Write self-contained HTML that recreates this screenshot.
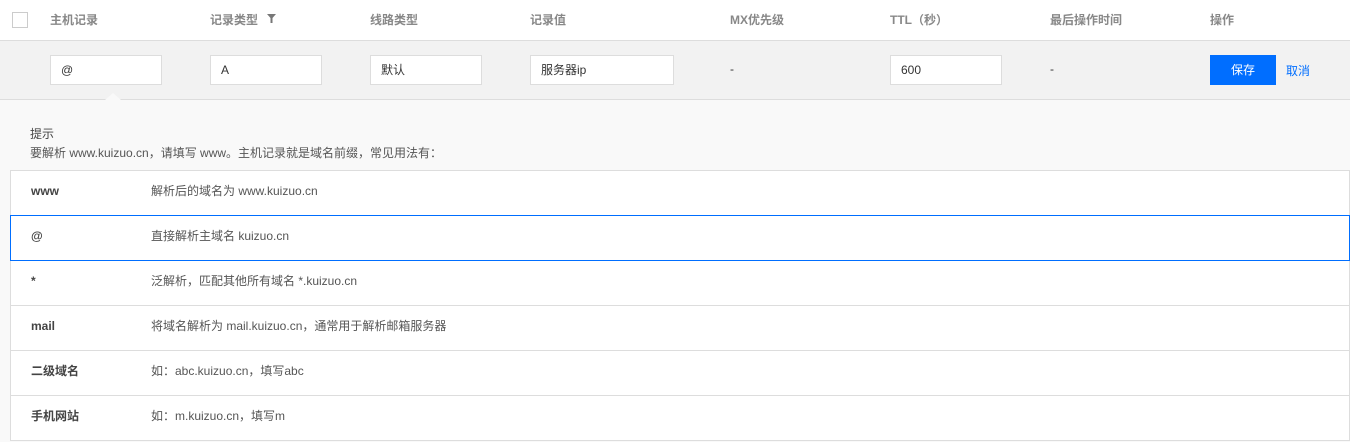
<!DOCTYPE html>
<html><head><meta charset="utf-8"><style>
*{box-sizing:border-box;margin:0;padding:0}
body{width:1350px;height:442px;background:#fff;font-family:"Liberation Sans","Noto Sans CJK SC",sans-serif;font-size:12px;color:#333;position:relative;overflow:hidden}
.a{position:absolute;white-space:nowrap}
.h{top:13px;color:#888;font-weight:bold;line-height:14px}
.inp{position:absolute;top:55px;height:30px;border:1px solid #ddd;background:#fff;padding-left:10px;line-height:28px;color:#333}
.row{position:absolute;left:10px;width:1340px;height:46px;border:1px solid #ddd;background:#fff;line-height:40px}
.row .k{position:absolute;left:20px;top:0;font-weight:bold;color:#444}
.row .v{position:absolute;left:140px;top:0;color:#555}
</style></head><body>
<div class="a" style="left:12px;top:12px;width:16px;height:16px;border:1px solid #ccc"></div>
<div class="a h" style="left:50px">主机记录</div>
<div class="a h" style="left:210px">记录类型</div>
<svg class="a" style="left:267px;top:14px" width="9" height="9" viewBox="0 0 9 9"><path d="M0 0H9L5.5 4V9H3.5V4Z" fill="#777"/></svg>
<div class="a h" style="left:370px">线路类型</div>
<div class="a h" style="left:530px">记录值</div>
<div class="a h" style="left:730px">MX优先级</div>
<div class="a h" style="left:890px">TTL（秒）</div>
<div class="a h" style="left:1050px">最后操作时间</div>
<div class="a h" style="left:1210px">操作</div>
<div class="a" style="left:0;top:40px;width:1350px;height:60px;background:#f2f2f2;border-top:1px solid #ddd;border-bottom:1px solid #ddd"></div>
<div class="inp" style="left:50px;width:112px">@</div>
<div class="inp" style="left:210px;width:112px">A</div>
<div class="inp" style="left:370px;width:112px">默认</div>
<div class="inp" style="left:530px;width:144px">服务器ip</div>
<div class="a" style="left:730px;top:62px">-</div>
<div class="inp" style="left:890px;width:112px">600</div>
<div class="a" style="left:1050px;top:62px">-</div>
<div class="a" style="left:1210px;top:55px;width:66px;height:30px;background:#006eff;color:#fff;text-align:center;line-height:30px">保存</div>
<div class="a" style="left:1286px;top:62px;color:#006eff">取消</div>
<div class="a" style="left:0;top:100px;width:1350px;height:342px;background:#f9f9f9"></div>
<div class="a" style="left:105px;top:93px;width:0;height:0;border-left:8px solid transparent;border-right:8px solid transparent;border-bottom:7px solid #f9f9f9"></div>
<div class="a" style="left:30px;top:125px;color:#444">提示</div>
<div class="a" style="left:30px;top:144px;color:#555">要解析 www.kuizuo.cn，请填写 www。主机记录就是域名前缀，常见用法有：</div>
<div class="row" style="top:170px"><span class="k">www</span><span class="v">解析后的域名为 www.kuizuo.cn</span></div>
<div class="row" style="top:260px"><span class="k">*</span><span class="v">泛解析，匹配其他所有域名 *.kuizuo.cn</span></div>
<div class="row" style="top:305px"><span class="k">mail</span><span class="v">将域名解析为 mail.kuizuo.cn，通常用于解析邮箱服务器</span></div>
<div class="row" style="top:350px"><span class="k">二级域名</span><span class="v">如：abc.kuizuo.cn，填写abc</span></div>
<div class="row" style="top:395px"><span class="k">手机网站</span><span class="v">如：m.kuizuo.cn，填写m</span></div>
<div class="row" style="top:215px;border-color:#006eff"><span class="k">@</span><span class="v">直接解析主域名 kuizuo.cn</span></div>
</body></html>
